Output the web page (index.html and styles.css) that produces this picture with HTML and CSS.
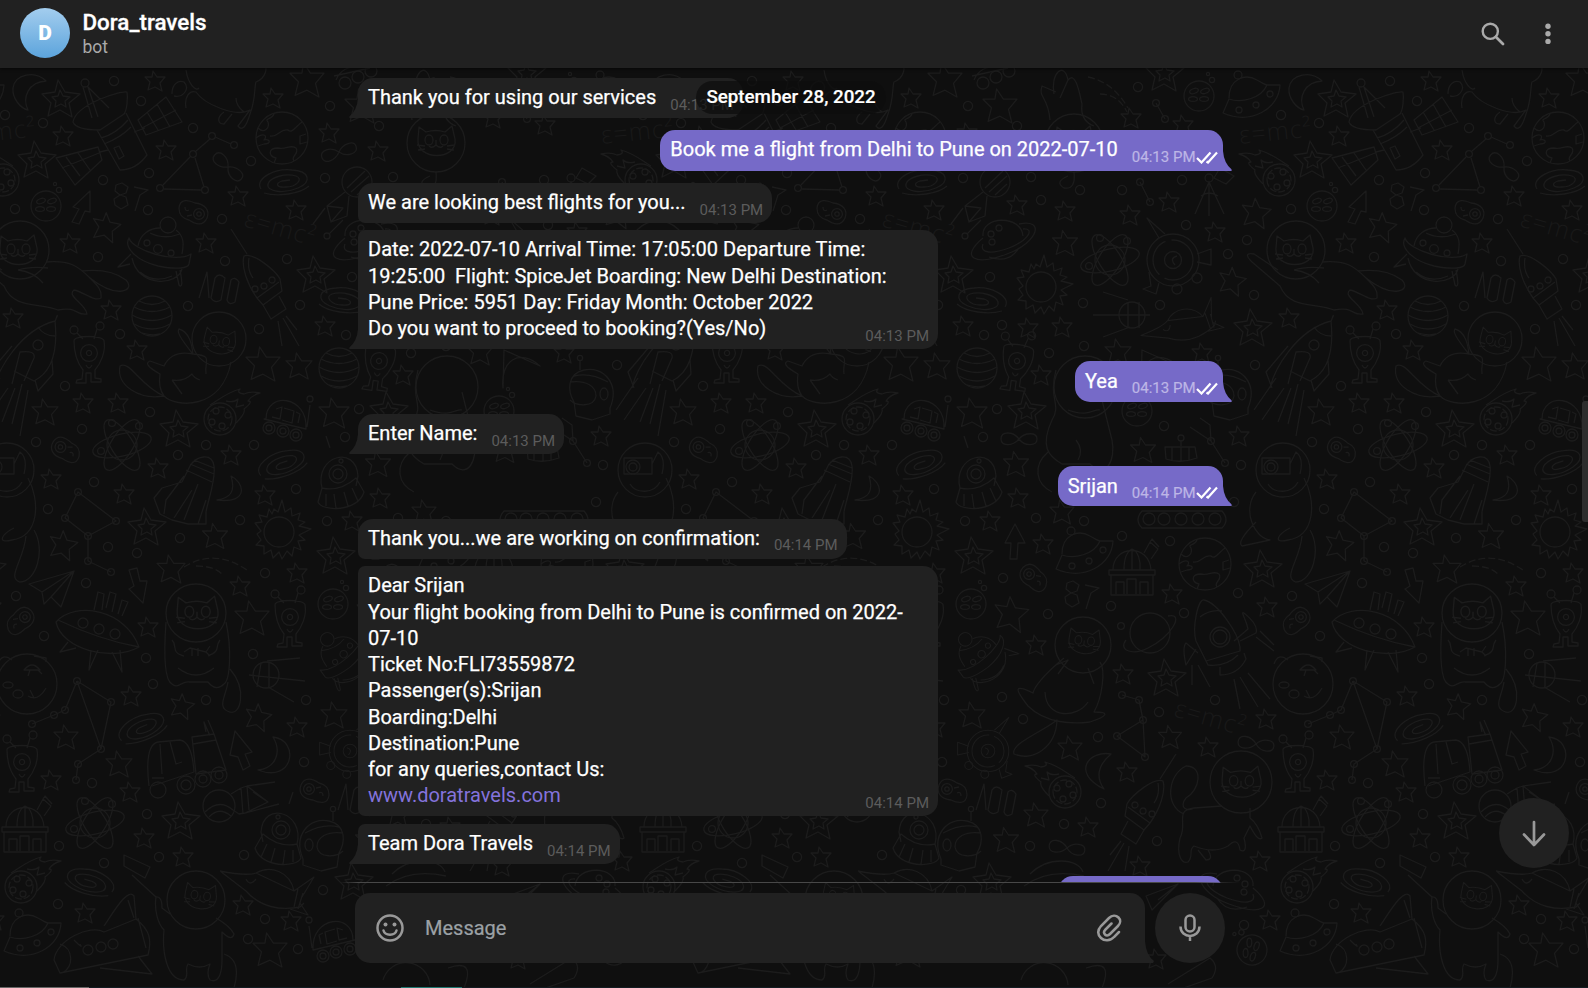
FILE: index.html
```html
<!DOCTYPE html>
<html lang="en">
<head>
<meta charset="utf-8">
<title>Dora_travels</title>
<link rel="stylesheet" href="styles.css">
</head>
<body>
<div class="app">
  <svg class="wallpaper" width="1588" height="988" viewBox="0 0 1588 988" aria-hidden="true">
    <defs>
      <path id="star" vector-effect="non-scaling-stroke" d="M-2-10 2-4 10-4 5 2 7 10 0 6-7 9-5 1-10-4-3-4Z"/>
      <g id="dstar"><path d="M-3-19 4-7 19-5 8 4 11 18-1 11-13 17-10 4-19-5-6-7Z"/><path d="M-1-9 2-3 9-2 4 2 5 8 0 5-6 8-5 2-9-2-3-3Z"/></g>
      <circle id="ring" r="4.6"/>
      <circle id="dot" r="3.4"/>
      <path id="inf" d="M0 0C-6-8-18-8-18 0S-6 7 0 0 18-7 18 0 6 8 0 0Z"/>
      <path id="galaxy" d="M-23 7C-30-4-8-14 8-12 26-11 28 0 14 6 0 12-18 10-16 2-14-5 2-9 12-6 20-3 12 5 2 5-8 6-9 1-2-1L6-2M-20 11C-6 15 16 12 25 4"/>
      <g id="button"><circle r="15"/><ellipse cx="-5" cy="-5" rx="4.5" ry="2.4" transform="rotate(-20 -5 -5)"/><ellipse cx="6" cy="-5" rx="4.5" ry="2.4" transform="rotate(-20 6 -5)"/><ellipse cx="-6" cy="3" rx="4.5" ry="2.4"/><ellipse cx="5" cy="3" rx="4.5" ry="2.4"/><circle cx="13" cy="-16" r="2.6"/><circle cx="9" cy="-22" r="1.6"/></g>
      <g id="earth"><circle r="26"/><path d="M-24-10C-18-4-12-10-14-16-18-20-10-18-8-24M-26 0C-18-6-14-2-18 2-12 0-10 6-18 6L-24 8M-12-2C-4 0-2-10 6-8 10-4 14-12 20-16M-4 10C-14 10-14 18-6 20L-8 25M-4 10C4 12 8 6 14 10 18 16 8 18 12 23M24-4 18-2 18 6 25 4"/></g>
      <g id="cell"><path d="M-14-4C-13-14-4-12 2-9 12-8 17-2 14 6 10 15 2 12-4 8-12 6-14 2-14-4Z"/><circle cx="6" cy="2" r="5.4"/><circle cx="6" cy="2" r="2.2"/><path d="M-8-5Q-8 0-4-2M-6 4-1 3"/></g>
      <g id="alien"><circle cx="-15" cy="-23" r="4"/><circle cx="11" cy="-27" r="4"/><path d="M-12-20-6-14M8-24 5-14M-15-12C-16-18 15-18 15-12 17-2 12 10 6 17L6 25 12 26 12 29 2 29 2 20-3 20-3 30-13 30-12 27-7 26-6 17C-13 8-15-2-15-12ZM-3 12Q0 18 3 12"/><circle r="8.4"/><circle r="2.6"/></g>
      <g id="comet"><circle cx="-8" cy="8" r="16"/><circle cx="-8" cy="8" r="12" stroke-dasharray="7 2"/><circle cx="-12" cy="0" r="3"/><circle cx="0" cy="4" r="3"/><circle cx="-16" cy="11" r="3"/><circle cx="-6" cy="15" r="3"/><path d="M-18-6C-8-12-2-18 12-22Q8-18 16-17 22-20 32-18 24-16 20-10 26-10 16-2 18 2 8 12M-2-10Q6-8 10-12L8-4 16-6"/></g>
      <g id="saucer"><circle cx="-11" cy="-22" r="4"/><path d="M-20 1C-20-18-4-24 8-17 14-14 16-12 18-12L31-12C30 12 2 28-26 16L-20 2C-8 6 12 2 18-12"/><circle cx="21" cy="-3" r="3"/><circle cx="7" cy="8" r="3"/><circle cx="-10" cy="13" r="3"/></g>
      <g id="sun"><circle r="15"/><path d="M-5-23-1-20 3-32 6-20 12-24 13-16 21-19 19-12 26-10 20-6 32-3 20 3 26 8 19 9 22 18 15 15 13 24 8 19 3 27 0 20-6 26-8 18-15 22-15 14-23 13-18 8-22 2-18-1-24-9-17-10-20-17-12-15-10-23-7-18Z"/></g>
      <g id="atom"><ellipse rx="30" ry="11" transform="rotate(-14)"/><ellipse rx="29" ry="11" transform="rotate(58)"/><ellipse rx="29" ry="11" transform="rotate(-58)"/><circle cx="-10" cy="-22" r="3.4"/><circle cx="17" cy="-19" r="3.4"/><circle cx="-21" cy="6" r="3.4"/><circle r="15"/></g>
      <g id="cathead"><path d="M-18-4-17-16-10-11Q0-14 9-11L16-17 19-4C22 18-20 18-18-4ZM0-3V2Q-4 6-7 3M0 2Q4 6 7 3M-19 2-11 3M-18 7-11 6M19 2 11 3M18 7 11 6"/><ellipse cx="-7" cy="-3" rx="4" ry="5"/><ellipse cx="8" cy="-3" rx="4" ry="5"/></g>
      <g id="spinner"><circle cx="10" cy="-25" r="8"/><path d="M-20-4C-18-16-8-22 2-22M18-20C26-14 26-6 24 4M-8-17Q6-10 22-16M-29-12C-34-4-24 10 0 16 20 20 30 18 31 14L33 4C18 14-26 0-29-12ZM-27 4-40 17-28 14M-26 8C-20 38 20 36 24 19M-18 22Q-4 34 14 26M18 21 21 35Q26 40 22 20"/><circle cx="-11" cy="-7" r="3"/><circle cx="0" cy="-1" r="4.4"/><circle cx="13" cy="3" r="3"/></g>
      <g id="striped"><circle r="20"/><path d="M-13-15Q0-8 13-15M-18-9Q0 0 18-9M-20-1Q0 10 20-1M-18 8Q0 18 18 8M-10 17Q0 20 8 18"/></g>
      <g id="probe"><circle r="26"/><circle r="20" stroke-dasharray="40 6"/><circle r="8.5"/><path d="M4-4Q-4-2 2 5M-14-22-26-42-8-26M24-6 38-11V5L24 2M38-8V3M-24 12-22 26-30 29-17 34-14 23"/><circle cx="4" cy="29" r="5"/><circle cx="24" cy="18" r="5"/></g>
      <g id="minirocket"><path d="M-36-47-20-22M-23-20C-14-24 8-6 13 3L15 15-4 29-10 22C-20 8-26-10-23-20ZM-18-18Q-20-6-14 2M-10 22 12 6M-4 29 4 43 19 33 12 20M11 45 15 70M16 42 32 70M19 40 30 54"/><circle cx="-12" cy="13" r="3"/><circle cx="-3" cy="10" r="3"/><circle cx="5" cy="4" r="3"/></g>
      <g id="dome"><path d="M-19-3C-19-28 17-30 19-3M-8-3C-8-18-4-22 0-24 6-22 9-12 8-3M0-24V-3M-23-3H23V2H-23ZM-21 2V22H21V2M-16 21V9H-8V21M-5 21V6H4V21M8 21V9H16V21M12-20 18-31 26-24 19-14M18-31 20-34 27-26"/></g>
      <g id="rover"><path d="M-20 2C-20-26 22-22 20 12L-22 2ZM-10-8-4-10-6 2-14 0M-2-9 8-6 6 6-4 3M10-5 14-3 12 6M21 10 24-12"/><circle cx="24" cy="-18" r="3"/><circle cx="-17" cy="11" r="6"/><circle cx="-17" cy="11" r="3"/><circle cx="-3" cy="14" r="6"/><circle cx="-3" cy="14" r="3"/><circle cx="10" cy="18" r="6"/><circle cx="10" cy="18" r="3"/></g>
      <g id="pod"><path d="M-16 14C-24-18 18-30 20 2L18 12M-16 14Q2 18 18 4L26 18C20 38-16 38-20 28ZM-12 20-12 32M-4 20-2 34M6 18 10 32M14 14 20 27M-8-26-12-38"/><circle r="9"/><circle r="5"/><circle cx="3" cy="-13" r="2"/></g>
      <g id="hat"><path d="M-20 14C-30-10-14-28 6-24 24-20 22-2 16 8L14 22-2 26-20 20ZM20-12C4-14-6-8-6 2-4 14 14 12 20 6M-18-12Q0-22 16-18M10-24V-34"/><ellipse cx="-14" cy="0" rx="4" ry="6"/><circle cx="10" cy="-36" r="2.6"/></g>
      <g id="craft"><path d="M-50-14-24 6C-10 22 10 26 30 22L34 18M-50-14C-30-10-20-10-14-12 0-20 20-14 24 6L-14-12M24 6 44-8 32 12M20 24 38 30 30 18M28 4 24 22M33 8 28 24M-24-6Q-20 2-14-6"/></g>
      <g id="saturn"><path d="M-20-4C-22-24 18-26 20-4M-20-2C-44 18-28 26 4 14 36 2 42-22 16-16M-20 4C-24 14-10 14 6 8 26 0 32-12 20-11M-14 17Q6 24 16 8"/><circle cx="-12" cy="-6" r="3"/><circle cx="-4" cy="-12" r="3"/><circle cx="-11" cy="2" r="3"/></g>
      <g id="bars"><path d="M-22 8-14-18-12 8M-10 8-6-12Q-2-18 4-12L0 10Q-6 14-10 8ZM6 10 10-10Q14-14 18-8L14 12Q8 16 6 10Z"/></g>
      <g id="bacteria"><path d="M-6-12 0-14 6-10 4-4-2-2-7-6ZM-2-2-8 2-7 8-1 12 6 8 4 0ZM12-10 26-7 18-2 13 14"/></g>

      <g id="tile">
        <!-- small stars -->
        <g>
          <use href="#star" x="155" y="81"/><use href="#star" x="273" y="98"/><use href="#star" x="63" y="136"/><use href="#star" x="166" y="150"/><use href="#star" x="238" y="196"/><use href="#star" x="329" y="133"/><use href="#star" x="378" y="151"/><use href="#star" x="296" y="210"/><use href="#star" x="206" y="243"/><use href="#star" x="70" y="243"/><use href="#star" x="111" y="310"/><use href="#star" x="13" y="318"/><use href="#star" x="137" y="350"/><use href="#star" x="325" y="326"/><use href="#star" x="83" y="403"/><use href="#star" x="118" y="403"/><use href="#star" x="231" y="455"/><use href="#star" x="158" y="468"/><use href="#star" x="51" y="479"/><use href="#star" x="124" y="494"/><use href="#star" x="265" y="495"/><use href="#star" x="380" y="498"/><use href="#star" x="352" y="521"/><use href="#star" x="240" y="586"/><use href="#star" x="297" y="573"/><use href="#star" x="148" y="627"/><use href="#star" x="131" y="696"/><use href="#star" x="297" y="727"/><use href="#star" x="51" y="780"/><use href="#star" x="130" y="792"/><use href="#star" x="144" y="838"/><use href="#star" x="183" y="857"/><use href="#star" x="85" y="913"/><use href="#star" x="243" y="905"/><use href="#star" x="291" y="921"/><use href="#star" x="493" y="118"/><use href="#star" x="545" y="125"/><use href="#star" x="379" y="205"/><use href="#star" x="427" y="211"/><use href="#star" x="492" y="215"/><use href="#star" x="531" y="202"/><use href="#star" x="577" y="232"/><use href="#star" x="424" y="327"/><use href="#star" x="390" y="328"/><use href="#star" x="564" y="353"/><use href="#star" x="403" y="375"/><use href="#star" x="601" y="436"/><use href="#star" x="405" y="544"/><use href="#star" x="534" y="594"/><use href="#star" x="629" y="607"/><use href="#star" x="398" y="645"/><use href="#star" x="485" y="674"/><use href="#star" x="570" y="747"/><use href="#star" x="628" y="719"/><use href="#star" x="489" y="772"/><use href="#star" x="450" y="827"/><use href="#star" x="502" y="866"/><use href="#star" x="622" y="861"/><use href="#star" x="632" y="920"/><use href="#star" x="518" y="959"/>
        </g>
        <!-- larger stars -->
        <g>
          <use href="#star" transform="translate(307 80)scale(1.7)"/><use href="#star" transform="translate(106 227)rotate(12)scale(1.4)"/><use href="#star" transform="translate(362 106)scale(1.7)"/><use href="#star" transform="translate(263 364)scale(1.7)"/><use href="#star" transform="translate(299 366)scale(1.3)"/><use href="#star" transform="translate(45 412)scale(1.3)"/><use href="#star" transform="translate(334 413)scale(1.5)"/><use href="#star" transform="translate(378 464)scale(1.25)"/><use href="#star" transform="translate(215 536)scale(1.25)"/><use href="#star" transform="translate(63 545)rotate(12)scale(1.4)"/><use href="#star" transform="translate(171 569)scale(1.4)"/><use href="#star" transform="translate(182 706)rotate(12)scale(1.2)"/><use href="#star" transform="translate(258 717)rotate(12)scale(1.3)"/><use href="#star" transform="translate(334 715)scale(1.3)"/><use href="#star" transform="translate(66 737)scale(1.2)"/><use href="#star" transform="translate(119 764)scale(1.3)"/><use href="#star" transform="translate(252 618)scale(1.7)"/><use href="#star" transform="translate(270 950)scale(1.7)"/><use href="#star" transform="translate(427 243)scale(1.25)"/><use href="#star" transform="translate(594 281)rotate(12)scale(1.35)"/><use href="#star" transform="translate(618 213)rotate(8)scale(1.45)"/><use href="#star" transform="translate(480 352)scale(1.3)"/><use href="#star" transform="translate(505 450)scale(1.25)"/><use href="#star" transform="translate(424 512)scale(1.2)"/><use href="#star" transform="translate(373 614)rotate(8)scale(1.7)"/><use href="#star" transform="translate(432 748)scale(1.2)"/><use href="#star" transform="translate(532 737)scale(1.15)"/><use href="#star" transform="translate(398 815)scale(1.2)"/><use href="#star" transform="translate(368 840)scale(1.25)"/>
          <use href="#dstar" x="61" y="99"/><use href="#dstar" x="37" y="160"/><use href="#dstar" x="316" y="275"/><use href="#dstar" x="179" y="429"/><use href="#dstar" x="147" y="527"/><use href="#dstar" x="336" y="556"/><use href="#dstar" x="181" y="821"/><use href="#dstar" x="354" y="882"/><use href="#dstar" x="527" y="73"/><use href="#dstar" x="615" y="328"/><use href="#dstar" x="389" y="411"/><use href="#dstar" x="625" y="569"/><use href="#dstar" x="529" y="678"/>
        </g>
        <!-- rings -->
        <g>
          <use href="#ring" x="114" y="81"/><use href="#ring" x="141" y="101"/><use href="#ring" x="5" y="115"/><use href="#ring" x="43" y="123"/><use href="#ring" x="193" y="128"/><use href="#ring" x="251" y="161"/><use href="#ring" x="149" y="173"/><use href="#ring" x="103" y="180"/><use href="#ring" x="15" y="209"/><use href="#ring" x="148" y="210"/><use href="#ring" x="222" y="219"/><use href="#ring" x="330" y="106"/><use href="#ring" x="379" y="126"/><use href="#ring" x="325" y="178"/><use href="#ring" x="393" y="177"/><use href="#ring" x="98" y="257"/><use href="#ring" x="225" y="261"/><use href="#ring" x="287" y="259"/><use href="#ring" x="188" y="306"/><use href="#ring" x="120" y="334"/><use href="#ring" x="259" y="329"/><use href="#ring" x="300" y="305"/><use href="#ring" x="346" y="335"/><use href="#ring" x="65" y="386"/><use href="#ring" x="150" y="412"/><use href="#ring" x="206" y="445"/><use href="#ring" x="82" y="429"/><use href="#ring" x="36" y="442"/><use href="#ring" x="178" y="455"/><use href="#ring" x="254" y="445"/><use href="#ring" x="94" y="482"/><use href="#ring" x="296" y="489"/><use href="#ring" x="48" y="509"/><use href="#ring" x="240" y="520"/><use href="#ring" x="180" y="538"/><use href="#ring" x="108" y="547"/><use href="#ring" x="137" y="553"/><use href="#ring" x="327" y="521"/><use href="#ring" x="265" y="573"/><use href="#ring" x="86" y="583"/><use href="#ring" x="16" y="596"/><use href="#ring" x="44" y="636"/><use href="#ring" x="146" y="658"/><use href="#ring" x="153" y="684"/><use href="#ring" x="206" y="700"/><use href="#ring" x="253" y="654"/><use href="#ring" x="306" y="700"/><use href="#ring" x="304" y="762"/><use href="#ring" x="92" y="783"/><use href="#ring" x="147" y="814"/><use href="#ring" x="59" y="846"/><use href="#ring" x="159" y="857"/><use href="#ring" x="244" y="855"/><use href="#ring" x="104" y="863"/><use href="#ring" x="58" y="904"/><use href="#ring" x="323" y="890"/><use href="#ring" x="265" y="919"/><use href="#ring" x="248" y="939"/><use href="#ring" x="298" y="949"/><use href="#ring" x="500" y="87"/><use href="#ring" x="403" y="200"/><use href="#ring" x="442" y="190"/><use href="#ring" x="484" y="190"/><use href="#ring" x="544" y="180"/><use href="#ring" x="548" y="225"/><use href="#ring" x="590" y="254"/><use href="#ring" x="609" y="240"/><use href="#ring" x="352" y="277"/><use href="#ring" x="364" y="325"/><use href="#ring" x="445" y="303"/><use href="#ring" x="522" y="305"/><use href="#ring" x="616" y="295"/><use href="#ring" x="446" y="346"/><use href="#ring" x="411" y="353"/><use href="#ring" x="617" y="365"/><use href="#ring" x="359" y="409"/><use href="#ring" x="345" y="437"/><use href="#ring" x="526" y="426"/><use href="#ring" x="603" y="465"/><use href="#ring" x="596" y="502"/><use href="#ring" x="398" y="518"/><use href="#ring" x="446" y="521"/><use href="#ring" x="484" y="536"/><use href="#ring" x="532" y="541"/><use href="#ring" x="365" y="578"/><use href="#ring" x="473" y="606"/><use href="#ring" x="410" y="614"/><use href="#ring" x="546" y="613"/><use href="#ring" x="600" y="593"/><use href="#ring" x="364" y="697"/><use href="#ring" x="385" y="719"/><use href="#ring" x="460" y="737"/><use href="#ring" x="521" y="712"/><use href="#ring" x="577" y="700"/><use href="#ring" x="463" y="803"/><use href="#ring" x="426" y="824"/><use href="#ring" x="392" y="846"/><use href="#ring" x="519" y="841"/><use href="#ring" x="606" y="925"/><use href="#dot" x="483" y="626"/>
        </g>
        <!-- repeated space objects -->
        <g>
          <use href="#earth" x="282" y="138"/><use href="#earth" x="567" y="564"/>
          <use href="#inf" transform="translate(228 167)rotate(42)"/><use href="#inf" transform="translate(339 152)rotate(-18)"/><use href="#inf" x="381" y="439"/><use href="#inf" transform="translate(429 848)rotate(8)"/><use href="#inf" transform="translate(618 744)rotate(8)"/>
          <use href="#galaxy" x="284" y="182"/><use href="#galaxy" transform="translate(344 300)scale(-1 1)"/><use href="#galaxy" transform="translate(282 464)rotate(-12)"/><use href="#galaxy" transform="translate(142 728)rotate(-15)"/><use href="#galaxy" transform="translate(90 882)scale(-1 1)rotate(-8)"/>
          <use href="#button" x="46" y="206"/><use href="#button" x="333" y="604"/><use href="#button" x="561" y="96"/><use href="#button" x="499" y="411"/><use href="#button" transform="translate(614 950)rotate(-70)"/>
          <use href="#cell" x="193" y="212"/><use href="#cell" transform="translate(66 450)rotate(190)"/><use href="#cell" transform="translate(396 578)rotate(200)"/><use href="#cell" transform="translate(315 791)rotate(180)"/><use href="#cell" transform="translate(20 621)scale(1 -1)rotate(20)"/>
          <use href="#alien" x="89" y="353"/><use href="#alien" x="290" y="617"/><use href="#alien" x="22" y="762"/><use href="#alien" transform="translate(379 361)rotate(8)"/>
          <use href="#comet" x="228" y="411"/><use href="#comet" x="29" y="879"/><use href="#comet" transform="translate(-5 172)scale(-1 1)"/><use href="#comet" transform="translate(419 784)scale(-1 1)"/>
          <use href="#saucer" x="-27" y="97"/><use href="#saucer" x="444" y="553"/><use href="#saucer" x="30" y="935"/>
          <use href="#sun" x="279" y="532"/><use href="#sun" x="403" y="287"/>
          <use href="#atom" x="122" y="445"/><use href="#atom" x="95" y="823"/><use href="#atom" x="472" y="260"/>
          <use href="#spinner" x="158" y="250"/><use href="#spinner" transform="translate(344 655)rotate(-25)scale(-.85 .85)"/>
          <use href="#striped" x="152" y="316"/><use href="#striped" x="339" y="368"/>
          <use href="#probe" x="535" y="260"/><use href="#probe" transform="translate(350 751)scale(-.8 .8)"/>
          <use href="#minirocket" x="267" y="276"/><use href="#minirocket" transform="translate(502 801)scale(-1 1)"/>
          <use href="#dome" x="25" y="830"/><use href="#dome" x="494" y="573"/>
          <use href="#rover" x="286" y="417"/><use href="#rover" transform="translate(333 938)scale(-1 1)"/>
          <use href="#pod" x="338" y="474"/><use href="#pod" transform="translate(281 830)scale(-1 1)"/>
          <use href="#hat" x="323" y="845"/><use href="#hat" transform="translate(590 394)scale(-1 1)"/>
          <use href="#craft" x="270" y="885"/><use href="#craft" transform="translate(545 323)rotate(-32)scale(.85)"/>
          <use href="#saturn" x="365" y="240"/><use href="#saturn" transform="translate(595 890)scale(-1 1)"/>
          <use href="#bars" x="221" y="290"/><use href="#bars" x="360" y="802"/>
          <use href="#bacteria" x="122" y="197"/><use href="#bacteria" x="435" y="595"/>
          <g class="formula"><text x="-36" y="144" transform="rotate(-6 -36 144)">ε=mc²</text><text x="243" y="226" transform="rotate(16 243 226)">ε=mc²</text><text x="535" y="716" transform="rotate(16 535 716)">ε=mc²</text></g>
        </g>
        <!-- satellite, crescents, arrows, constellations -->
        <path d="M46 81C35 70 15 74 13 88 12 98 20 108 28 110 22 98 28 82 46 81ZM73 122C76 104 122 90 127 92 128 98 127 110 124 114L100 130Q76 130 73 122ZM88 87 98 117M83 87 92 118M87 86 109 108M97 130 120 170Q136 170 147 155L126 113M101 138Q116 134 128 120M104 144Q120 138 131 127M114 148 119 146 124 156 119 159ZM138 120 166 97 182 122 146 135ZM147 112 158 130M157 104 170 127M142 128 176 110M56 158 98 147 102 160 75 185ZM66 157 80 176M78 153 90 170M62 168 99 153M134 132 145 128M100 152 108 150"/>
        <circle cx="85" cy="83" r="4"/>
        <path d="M186 70C188 84 196 92 199 88M172 94C172 84 178 80 184 82 190 88 184 98 174 96M186 108C184 96 190 90 196 92 204 104 236 118 250 110L238 126Q244 134 250 114C256 98 254 88 256 82 266 78 268 68 264 62M236 98Q236 106 244 112M224 112C216 118 218 124 224 124L232 114"/>
        <path d="M196 151 210 139M215 137 231 144M190 157 163 185M164 189 201 190M195 158 204 187M78 492 65 518 88 536 116 521ZM88 536V561L111 572M77 681 65 710 54 715 32 724M77 681 111 702 101 749 78 764 76 780M77 681 101 749M518 103 527 119M502 182 512 202M484 695 501 700 505 720 507 757 479 736 505 720M552 427 573 441 587 463M573 441 572 425 562 418"/>
        <g><use href="#dot" x="212" y="136"/><use href="#dot" x="234" y="145"/><use href="#dot" x="193" y="154"/><use href="#dot" x="160" y="188"/><use href="#dot" x="205" y="190"/><use href="#dot" x="78" y="492"/><use href="#dot" x="65" y="518"/><use href="#dot" x="88" y="536"/><use href="#dot" x="116" y="521"/><use href="#dot" x="88" y="561"/><use href="#dot" x="111" y="572"/><use href="#dot" x="77" y="681"/><use href="#dot" x="111" y="702"/><use href="#dot" x="65" y="710"/><use href="#dot" x="54" y="715"/><use href="#dot" x="32" y="724"/><use href="#dot" x="101" y="749"/><use href="#dot" x="78" y="764"/><use href="#dot" x="76" y="780"/><use href="#dot" x="518" y="103"/><use href="#dot" x="527" y="119"/><use href="#dot" x="502" y="182"/><use href="#dot" x="512" y="202"/><use href="#dot" x="484" y="695"/><use href="#dot" x="501" y="700"/><use href="#dot" x="505" y="720"/><use href="#dot" x="507" y="757"/><use href="#dot" x="479" y="736"/><use href="#dot" x="573" y="441"/><use href="#dot" x="587" y="463"/></g>
        <path d="M90 191 73 207 79 209 72 222 79 224 85 211 90 212ZM377 524 367 543 373 543 372 559 379 559 380 543 387 543ZM129 570 137 568 140 581 147 581 143 603 129 589 134 586ZM235 731 252 752 245 754 250 766 243 770 238 757 230 755Z"/>
        <path d="M231 476C244 482 250 504 217 500 230 498 236 492 231 476ZM273 737C300 740 294 784 258 770 276 768 282 752 273 737ZM473 754C452 750 432 772 466 789 454 772 466 760 473 754Z"/>
        <path d="M450 77Q475 82 490 108M462 94Q480 94 489 112M184 567Q214 548 247 570M196 566Q214 566 222 574" stroke-dasharray="7 3"/>
        <path d="M29 584 74 571 61 607 51 597 44 604 42 592ZM42 592 74 571 51 597"/>
        <!-- telescope, sputnik, robot -->
        <path d="M571 182 557 214M571 182V216M571 182 586 214M563 196Q571 190 580 196M576 178 588 184 596 176 582 168ZM455 315H512M465 292 490 300M465 337 492 327M490 302V328M501 302V328M527 447H557L559 458Q543 464 528 459ZM534 447V460M543 447V461M551 447V460M543 446V440M504 511H584Q592 520 584 528H504Q496 520 504 511Z"/>
        <circle cx="571" cy="178" r="4"/><circle cx="494" cy="315" r="13"/><circle cx="543" cy="438" r="3"/><circle cx="511" cy="519" r="6"/><circle cx="526" cy="519" r="6"/><circle cx="543" cy="519" r="6"/><circle cx="560" cy="519" r="6"/><circle cx="577" cy="519" r="6"/>
        <path d="M249 675 305 681M267 661 300 658M268 687 294 702M261 663 257 687M269 662 269 687"/><circle cx="266" cy="675" r="13"/>
        <!-- lander -->
        <g transform="translate(357 182)"><circle r="15"/><path d="M-10 6 8-11M-6 10 12-6M0 13 12 2M-12 10-30 24-26 40-10 34-8 14M-26 40-14 26-30 24M-32 26-44 42M-14 38-28 52"/><circle cx="-30" cy="54" r="3"/></g>
        <g transform="translate(219 806)"><circle r="16"/><path d="M-14 6Q0-8 14 4M-10 11Q0 0 12 10M12-12 22-18 28-20 49-4 26 7 20 8 14 4M22-18 24 8M28-20 30 4M34-14 49-4M28-20 56-24M26 7 60-2"/></g>
        <!-- rockets -->
        <path d="M57 317C58 312 56 320 55 321 20 330-2 370-6 388M55 321C58 350 52 372 34 381L14 371M38 327Q44 336 55 336M-4 388-10 372 12 346M12 384 20 352Q36 350 34 358L24 381M35 380 38 391 53 374 52 360M0 378-22 410M8 388-14 420M15 388 2 422M22 384 12 424M28 390 20 436"/><circle cx="38" cy="345" r="5"/>
        <path d="M190 466C196 456 212 452 214 466 216 480 208 500 206 512L206 524 188 524 172 520 160 514 154 498 162 488 182 482ZM186 470 212 482M190 464 214 474M194 460 214 468M184 476 166 500 164 514M198 484 184 520M192 490 174 518M206 500 198 524"/>
        <g transform="translate(582 637)"><path d="M-24 4C-28-10-22-38-16-37-2-34 18-4 20 10L20 14-14 24ZM-20-20Q-10-28 2-26M-14 24-12 28Q6 30 18 18M0 30 0 38Q18 38 26 22L24 16M14 4 28-8C26-18 20-26 24-24 34-16 38-10 36-4L20 4M-24 12-34 28Q-38 10-34 6L-22 16M-22 28-10 50M-28 28-28 48M14 42 20 72M20 40 38 70M28 36 50 62M36 0 54 14M40-6 54 8"/><circle r="10"/><circle r="7"/></g>
        <path d="M54 960C56 940 90 924 104 932L136 919C150 930 152 940 148 955L60 973ZM104 926C116 908 128 888 134 896L136 919M60 944C74 948 74 968 62 973M100 968 152 974 138 956M138 918 146 948M128 900 134 918M74 940Q84 950 80 944"/><circle cx="88" cy="950" r="5"/><circle cx="101" cy="947" r="5"/><circle cx="113" cy="944" r="5"/>
        <!-- walking saucer -->
        <path d="M56 622C76 600 126 610 139 647 112 662 62 650 56 622ZM58 620Q100 640 139 647M94 610 98 592 104 594 102 610M106 608 110 592 116 594 112 612M118 614 122 600 128 602 122 616M68 642 60 652 76 648M91 650 89 670 98 650M112 652 122 672 120 650"/><circle cx="83" cy="623" r="5"/><circle cx="99" cy="629" r="5"/><circle cx="115" cy="634" r="5"/>
        <!-- cratered moon -->
        <circle cx="27" cy="684" r="30"/><ellipse cx="8" cy="685" rx="5" ry="3"/><ellipse cx="18" cy="694" rx="5" ry="4"/><path d="M24 670Q32 660 40 670ZM30 670 28 676M38 670 42 674M28 696Q38 702 46 688M34 698 30 690M-2 664Q2 652 12 660M34 656 46 658 46 662"/>
        <!-- truck -->
        <path d="M149 786C146 760 148 744 158 742L180 740Q192 742 194 772L152 786M160 744 162 774M170 742 176 764 182 762M192 737 214 734 226 770 196 774ZM193 744 216 740M206 732 204 722 210 736M208 720 214 734M152 778H164"/><circle cx="158" cy="790" r="8"/><circle cx="186" cy="785" r="9"/><circle cx="186" cy="785" r="5"/><circle cx="203" cy="779" r="8"/><circle cx="203" cy="779" r="4"/><circle cx="219" cy="775" r="8"/><circle cx="219" cy="775" r="4"/>
        <!-- ringed planet -->
        <circle cx="512" cy="633" r="20"/><path d="M530 616C548 612 532 638 510 648 494 656 480 650 488 640"/>
        <!-- cats -->
        <circle cx="20" cy="250" r="29"/><use href="#cathead" x="18" y="252"/><path d="M18 270Q30 266 48 268M18 270Q34 272 43 283M46 262C70 260 78 266 90 278 98 286 102 290 101 298 94 302 84 292 74 290 66 296 86 304 87 314 76 316 78 306 58 310 40 302 14 310 4 286L-24 262Q-34 252-22 254L2 270M82 271Q110 268 126 280C136 290 118 300 90 278"/>
        <circle cx="219" cy="339" r="27"/><use href="#cathead" transform="translate(219 343)rotate(10)scale(.85)"/><path d="M192 353C182 340 176 332 179 329 190 332 192 346 193 354 214 356 204 360 206 374M193 354Q172 350 164 366L150 361Q142 364 160 374 158 388 164 396C176 408 222 410 231 362M120 366C130 360 140 386 164 396 140 400 116 386 120 366ZM172 380Q184 382 192 374 194 378 200 380M172 380 182 394"/>
        <ellipse cx="196" cy="613" rx="30" ry="29"/><use href="#cathead" transform="translate(197 615)scale(1.1)"/><path d="M166 622C164 650 164 680 172 684 178 690 182 680 190 682H208Q216 692 224 684C230 680 232 650 226 622M172 640C178 646 170 652 184 656M220 640C214 648 222 650 208 656M178 668Q196 682 214 668M230 669C248 690 240 716 230 712 216 708 226 696 228 682M184 652 190 648 206 652 210 646M206 652 210 656M192 648V656M198 648V656"/>
        <circle cx="196" cy="900" r="29"/><use href="#cathead" transform="translate(200 898)rotate(8)scale(.85)"/><path d="M124 855 150 867 145 878 124 866ZM132 875 156 897C154 910 158 924 164 930 162 950 166 980 184 980 190 976 184 970 188 964Q200 970 210 964 206 974 210 980C220 984 222 970 222 960V932Q232 942 234 934 230 926 216 918M156 897Q162 896 162 908L170 914M224 954Q242 960 234 988"/>
        <circle cx="7" cy="470" r="27"/><path d="M-20 492C-34 510-22 538-6 540L-34 546Q-40 542-20 522M28 478C40 500 40 536 12 540-4 544 2 534 14 528M34 530C46 550 36 582 20 582 6 578 24 560 26 536M-14 458H14V474H-14ZM14 464 20 452Q28 458 24 474M-8 484C-2 494 16 494 22 482"/><circle cx="-5" cy="467" r="7"/><circle cx="-5" cy="467" r="4"/>
        <circle cx="445" cy="645" r="28"/><use href="#cathead" transform="translate(446 643)rotate(6)scale(.85)"/><path d="M426 658C404 676 396 688 395 693 376 684 376 688 390 706 408 724 436 724 452 722 470 716 472 712 456 712 464 698 468 670 462 662M407 692C408 720 440 718 450 702M418 665 430 660 420 674M450 668 456 684"/><path d="M419 720C404 732 372 744 376 754 394 762 418 748 419 720Z"/>
        <circle cx="603" cy="782" r="31"/><use href="#cathead" transform="translate(603 784)scale(1.05)"/><path d="M584 806 556 808C536 810 550 824 542 838 538 856 544 864 550 862 556 856 550 850 556 846Q576 854 590 846 600 836 602 850 610 854 606 838L612 826Q620 842 624 838 620 824 612 818V808M546 814C526 806 530 774 548 766 566 766 562 790 548 798 540 808 550 812 556 808M560 850 568 860Q576 860 570 850"/>
        <path d="M418 370C410 400 424 404 414 420 402 446 410 456 424 464L452 464C468 480 478 460 474 440L462 392M410 452C394 466 398 484 414 492M430 410C452 418 456 408 462 410M438 440Q446 450 440 460"/><circle cx="447" cy="387" r="31"/>
        <circle cx="436" cy="143" r="29"/><use href="#cathead" x="436" y="143"/><path d="M412 120C410 96 400 98 404 86L418 92M416 94C412 74 426 60 430 80L422 98M430 80C438 70 442 96 444 104 442 118 450 124 456 126M436 172Q438 190 426 188 416 182 430 176"/>
        <path d="M334 76 370 68M336 80C340 70 348 66 362 66"/><circle cx="345" cy="83" r="6"/><circle cx="358" cy="77" r="6"/><circle cx="371" cy="71" r="6"/>
        <path d="M503 388C500 360 520 348 540 366L504 350ZM383 980A24 24 0 0 1 430 985M448 968Q476 958 464 988M530 984 572 958Q582 966 574 978L540 990M392 874C410 856 440 858 445 872M386 886Q410 868 446 876M508 896 540 884 514 910ZM508 896 540 884 520 900"/>
      </g>
    </defs>
    <g class="doodles"><use href="#tile" x="-638"/><use href="#tile"/><use href="#tile" x="638"/><use href="#tile" x="1276"/></g>
  </svg>

  <header class="topbar">
    <div class="avatar">D</div>
    <div class="peer"><div class="peer-name">Dora_travels</div><div class="peer-status">bot</div></div>
    <div class="topbar-actions">
      <svg width="24" height="24" viewBox="0 0 24 24"><circle cx="9.3" cy="9.3" r="7.6" fill="none" stroke="#aaa" stroke-width="2.4"/><path d="M15 15 22 22" stroke="#aaa" stroke-width="2.8" stroke-linecap="round"/></svg>
      <svg width="6" height="22" viewBox="0 0 6 22" fill="#aaa"><circle cx="3" cy="3.2" r="2.7"/><circle cx="3" cy="10.8" r="2.7"/><circle cx="3" cy="18.4" r="2.7"/></svg>
    </div>
  </header>

  <main class="chat">
    <div class="messages">
      <div class="msg in tail first"><span class="text">Thank you for using our services</span><span class="time">04:13 PM</span><svg class="tip" width="11" height="20" viewBox="0 0 11 20"><path d="M11 0V20H1Q-.5 19.500.8 18 8 12 9 0Z"/></svg></div>
      <div class="msg out"><span class="text">Book me a flight from Delhi to Pune on 2022-07-10</span><span class="time">04:13 PM</span><svg class="checks" width="22" height="13" viewBox="0 0 22 13"><path d="M1 7 5.500 11.500 14.500 1.500M10.500 10.500 12 11.500 21 1.500"/></svg><svg class="tip" width="11" height="20" viewBox="0 0 11 20"><path d="M0 0V20H10Q11.500 19.500 10.200 18 3 12 2 0Z"/></svg></div>
      <div class="msg in first"><span class="text">We are looking best flights for you...</span><span class="time">04:13 PM</span></div>
      <div class="msg in block tail next"><span class="text">Date: 2022-07-10 Arrival Time: 17:05:00 Departure Time:
19:25:00  Flight: SpiceJet Boarding: New Delhi Destination:
Pune Price: 5951 Day: Friday Month: October 2022
Do you want to proceed to booking?(Yes/No)</span><span class="time">04:13 PM</span><svg class="tip" width="11" height="20" viewBox="0 0 11 20"><path d="M11 0V20H1Q-.5 19.500.8 18 8 12 9 0Z"/></svg></div>
      <div class="msg out short"><span class="text">Yea</span><span class="time">04:13 PM</span><svg class="checks" width="22" height="13" viewBox="0 0 22 13"><path d="M1 7 5.500 11.500 14.500 1.500M10.500 10.500 12 11.500 21 1.500"/></svg><svg class="tip" width="11" height="20" viewBox="0 0 11 20"><path d="M0 0V20H10Q11.500 19.500 10.200 18 3 12 2 0Z"/></svg></div>
      <div class="msg in tail first"><span class="text">Enter Name:</span><span class="time">04:13 PM</span><svg class="tip" width="11" height="20" viewBox="0 0 11 20"><path d="M11 0V20H1Q-.5 19.500.8 18 8 12 9 0Z"/></svg></div>
      <div class="msg out short"><span class="text">Srijan</span><span class="time">04:14 PM</span><svg class="checks" width="22" height="13" viewBox="0 0 22 13"><path d="M1 7 5.500 11.500 14.500 1.500M10.500 10.500 12 11.500 21 1.500"/></svg><svg class="tip" width="11" height="20" viewBox="0 0 11 20"><path d="M0 0V20H10Q11.500 19.500 10.200 18 3 12 2 0Z"/></svg></div>
      <div class="msg in first"><span class="text">Thank you...we are working on confirmation:</span><span class="time">04:14 PM</span></div>
      <div class="msg in block ticket next"><span class="text">Dear Srijan
Your flight booking from Delhi to Pune is confirmed on 2022-
07-10
Ticket No:FLI73559872
Passenger(s):Srijan
Boarding:Delhi
Destination:Pune
for any queries,contact Us:
<a class="link">www.doratravels.com</a></span><span class="time">04:14 PM</span></div>
      <div class="msg in tail next last"><span class="text">Team Dora Travels</span><span class="time">04:14 PM</span><svg class="tip" width="11" height="20" viewBox="0 0 11 20"><path d="M11 0V20H1Q-.5 19.500.8 18 8 12 9 0Z"/></svg></div>
      <div class="msg out partial"></div>
    </div>
    <div class="date">September 28, 2022</div>
    <div class="go-down"><svg width="26" height="28" viewBox="0 0 26 28"><path d="M13 3V26M3 15.500 13 26 23 15.500"/></svg></div>
    <div class="scrollbar"></div>
  </main>

  <footer class="composer">
    <div class="input">
      <svg width="28" height="28" viewBox="0 0 28 28"><circle cx="14" cy="14" r="12.500"/><path d="M7.500 16.500C9 22 19 22 20.500 16.500" stroke-linecap="round"/><circle class="fill" cx="9.500" cy="10.500" r="2"/><circle class="fill" cx="18.500" cy="10.500" r="2"/></svg>
      <span class="placeholder">Message</span>
      <svg class="clip" width="26" height="28" viewBox="0 0 26 28"><path d="M23 18 18 23C14 27.500 8 27 5 24 1.500 20.500 1.500 16 5 12L13 4C16 1 20 1 22.500 3.500 25 6 24.500 9.500 22 12L14 20C12 22 10 21.500 9 20.500 7.500 19 8 17 9.500 15.500L15.500 9.500" stroke-linecap="round"/></svg>
      <svg class="input-tip" width="9" height="22" viewBox="0 0 9 22"><path d="M0 0V22H8L9 20Q1 14 0 0Z"/></svg>
    </div>
    <div class="mic"><svg width="22" height="28" viewBox="0 0 22 28"><rect x="6.500" y="1.500" width="9" height="16" rx="4.500"/><path d="M1.500 12.500C1.500 25 20.500 25 20.500 12.500M11 22V27"/></svg></div>
  </footer>
  <div class="edge"><i class="edge-a"></i><i class="edge-b"></i></div>
</div>
</body>
</html>
```
FILE: styles.css
```css
* { box-sizing: border-box; }
body { margin: 0; background: #0f0f0f; color: #fff; font-family: Roboto, "Liberation Sans", sans-serif; font-size: 20px; overflow: hidden; }
.app { position: relative; width: 1588px; height: 988px; display: flex; flex-direction: column; overflow: hidden; }
.wallpaper { position: absolute; inset: 0; }
.doodles { fill: none; stroke: #1c1c1c; stroke-width: 1.3; stroke-linejoin: round; }
.formula text { fill: #191919; stroke: none; font: 300 25px "Open Sans", sans-serif; letter-spacing: 1px; }

.topbar { position: relative; z-index: 2; height: 68px; flex: none; background: #212121; display: flex; align-items: center; padding: 0 37px 2px 20px; box-shadow: 0 1px 3px rgba(0,0,0,.6); }
.avatar { width: 50px; height: 50px; border-radius: 50%; background: linear-gradient(#a3cdee, #5ca4dc); font-weight: 900; font-size: 21px; display: flex; align-items: center; justify-content: center; }
.peer { margin: 2px 0 0 12.500px; }
.peer-name { font-size: 22.400px; font-weight: 500; line-height: 26px; white-space: nowrap; -webkit-text-stroke: .3px #fff; }
.peer-status { font-size: 17.500px; line-height: 24px; color: #aaa; }
.topbar-actions { margin-left: auto; display: flex; align-items: center; gap: 40px; padding-top: 2px; }

.chat { position: relative; height: 815px; flex: none; clip-path: inset(0); }
.messages { width: 865px; height: 814px; margin-left: 358px; padding-top: 10px; display: flex; flex-direction: column; }
.msg { position: relative; flex: none; align-self: flex-start; display: flex; align-items: flex-end; gap: 14px; min-height: 40.250px; padding: 7px 9px 7px 10px; line-height: 26.250px; background: #212121; border-radius: 7px 15px 15px 7px; margin-top: 12.200px; }
.msg:first-child { margin-top: 0; }
.msg.next { margin-top: 7px; }
.msg.last { margin-top: 7.750px; }
.msg.first { border-top-left-radius: 15px; }
.msg.tail { border-bottom-left-radius: 0; }
.msg.out { align-self: flex-end; background: #766ac8; border-radius: 15px 15px 0 15px; padding-right: 5px; }
.msg.block { display: grid; width: 580px; }
.block .text, .block .time { grid-area: 1 / 1; }
.block .text { top: -.8px; justify-self: start; }
.ticket .text { top: -.4px; }
.short .text { top: -.5px; }
.block .time { justify-self: end; align-self: end; }
.text { white-space: pre; position: relative; top: -1px; -webkit-text-stroke: .25px currentColor; }
.link { color: #8473dc; -webkit-text-stroke: 0; }
.time { font-size: 15px; line-height: 18px; color: #5c5c5c; white-space: nowrap; margin-bottom: -2.500px; }
.out .time { color: #bdb6e6; -webkit-text-stroke: .2px currentColor; }
.checks { margin: 0 0 0 -13.500px; fill: none; stroke: #fff; stroke-width: 2.200; }
.tip { position: absolute; bottom: 0; left: -9px; fill: #212121; }
.out .tip { left: auto; right: -9px; fill: #766ac8; }
.msg.partial { width: 165px; align-self: flex-end; border-radius: 15px; }
.date { position: absolute; left: 696px; top: 13px; width: 190px; height: 33px; border-radius: 17px; background: rgba(13,13,13,.74); font-size: 18.750px; font-weight: 500; line-height: 32px; text-align: center; white-space: nowrap; -webkit-text-stroke: .2px #fff; }
.chat::after { content: ""; position: absolute; left: 340px; bottom: 0; width: 900px; height: 1px; background: linear-gradient(90deg, transparent, #484848 2%, #484848 95%, transparent); }
.go-down { position: absolute; left: 1499px; top: 730px; width: 70px; height: 70px; border-radius: 50%; background: #212121; display: flex; align-items: center; justify-content: center; }
.go-down path { fill: none; stroke: #999; stroke-width: 2.700; stroke-linecap: round; stroke-linejoin: round; }
.scrollbar { position: absolute; right: 0; top: 333px; width: 6px; height: 121px; background: #2d2d2d; border-radius: 3px 0 0 3px; }

.composer { position: relative; display: flex; gap: 10px; padding: 10px 0 0 355px; }
.input { position: relative; width: 790px; height: 70px; border-radius: 15px 15px 0 15px; background: #212121; display: flex; align-items: center; padding: 0 23px 0 20.500px; }
.input svg, .mic svg { fill: none; stroke: #999; stroke-width: 2.500; }
.input .fill { fill: #999; stroke: none; }
.placeholder { margin-left: 21.500px; color: #9ca1a6; -webkit-text-stroke: .2px currentColor; }
.clip { margin-left: auto; }
.input .input-tip { position: absolute; right: -9px; bottom: 0; fill: #212121; stroke: none; }
.mic { width: 70px; height: 70px; border-radius: 50%; background: #212121; display: flex; align-items: center; justify-content: center; }
.edge { position: relative; margin-top: auto; height: 1px; background: #131c22; display: flex; }
.edge-a { width: 89px; background: #666; }
.edge-b { width: 61px; margin-left: 312px; background: #1f7770; }
```
